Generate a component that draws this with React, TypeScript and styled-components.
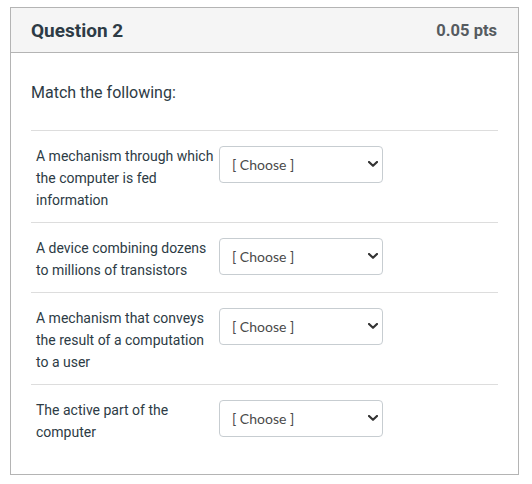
import React from "react";
import styled, { createGlobalStyle } from "styled-components";

const GlobalStyle = createGlobalStyle`
  body {
    margin: 0;
    background: #ffffff;
    font-family: Roboto, "Liberation Sans", Arial, sans-serif;
    color: #2d3b45;
  }
`;

const matches = [
  "A mechanism through which the computer is fed information",
  "A device combining dozens to millions of transistors",
  "A mechanism that conveys the result of a computation to a user",
  "The active part of the computer",
];

export default function App() {
  return (
    <>
      <GlobalStyle />
      <Page>
        <QuestionCard>
          <CardHeader>
            <QuestionTitle>Question 2</QuestionTitle>
            <Points>0.05 pts</Points>
          </CardHeader>
          <CardBody>
            <Prompt>Match the following:</Prompt>
            <MatchList>
              {matches.map((text) => (
                <MatchRow key={text}>
                  <MatchLabel>{text}</MatchLabel>
                  <SelectWrap>
                    <ChooseSelect defaultValue="">
                      <option value="">[ Choose ]</option>
                    </ChooseSelect>
                    <Chevron width="10" height="6" viewBox="0 0 10 6">
                      <path
                        d="M1 1 L5 4.8 L9 1"
                        fill="none"
                        stroke="#333"
                        strokeWidth="2.2"
                        strokeLinecap="round"
                        strokeLinejoin="round"
                      />
                    </Chevron>
                  </SelectWrap>
                </MatchRow>
              ))}
            </MatchList>
          </CardBody>
        </QuestionCard>
      </Page>
    </>
  );
}

const Page = styled.div`
  padding: 7px 13px 10px 10px;
`;

const QuestionCard = styled.div`
  box-sizing: border-box;
  width: 509px;
  border: 1px solid #b4b4b4;
  background: #fff;
`;

const CardHeader = styled.div`
  display: flex;
  align-items: center;
  justify-content: space-between;
  height: 44px;
  padding: 0 21px 0 20px;
  background: #f5f5f5;
  border-bottom: 1px solid #b4b4b4;
`;

const QuestionTitle = styled.div`
  font-size: 19px;
  font-weight: 700;
  color: #2d3b45;
`;

const Points = styled.div`
  font-size: 16.5px;
  font-weight: 700;
  color: #555b60;
`;

const CardBody = styled.div`
  padding: 29px 20px 20px 20px;
`;

const Prompt = styled.div`
  font-size: 16px;
  line-height: 22px;
  color: #2d3b45;
  margin-bottom: 26px;
`;

const MatchList = styled.div`
  display: flex;
  flex-direction: column;
`;

const MatchRow = styled.div`
  display: flex;
  align-items: flex-start;
  gap: 1px;
  padding: 14px 0 11px 5px;
  border-top: 1px solid #dddddd;
`;

const MatchLabel = styled.div`
  width: 182px;
  font-size: 14px;
  line-height: 22px;
  color: #2d3b45;
`;

const SelectWrap = styled.div`
  position: relative;
  margin-top: 1px;
`;

const ChooseSelect = styled.select`
  appearance: none;
  box-sizing: border-box;
  width: 164px;
  height: 37px;
  padding: 0 24px 0 12px;
  border: 1px solid #c7cdd1;
  border-radius: 4px;
  background: #fff;
  font-family: Lato, "Open Sans", sans-serif;
  font-size: 14px;
  color: #4a4a4a;
  outline: none;
`;

const Chevron = styled.svg`
  position: absolute;
  right: 5px;
  top: 15px;
  pointer-events: none;
`;
